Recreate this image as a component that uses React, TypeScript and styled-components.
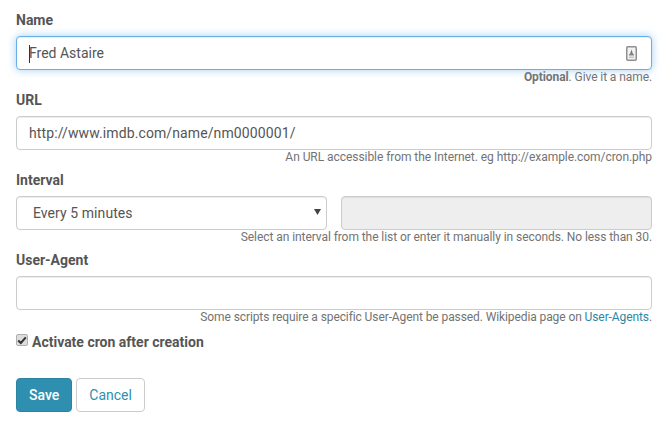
import React from "react";
import styled, { createGlobalStyle } from "styled-components";

const Global = createGlobalStyle`
  html, body { margin: 0; padding: 0; background: #fff; }
  body { font-family: Roboto, "Liberation Sans", sans-serif; font-size: 14px; color: #555; }
  * { box-sizing: border-box; }
`;

const Form = styled.form`
  width: 636px;
  margin-left: 16px;
  padding-top: 10px;
  display: flex;
  flex-direction: column;
`;

const Field = styled.div`
  height: 80px;
  display: flex;
  flex-direction: column;
`;

const Label = styled.label`
  display: block;
  height: 20px;
  line-height: 20px;
  margin-bottom: 6px;
  font-weight: 700;
  font-size: 14px;
  color: #555;
`;

const InputWrap = styled.div`
  position: relative;
  height: 34px;
`;

const Input = styled.input<{ $focus?: boolean; $wide?: boolean }>`
  display: block;
  width: 100%;
  height: 34px;
  padding: 6px 12px;
  font-family: inherit;
  font-size: 14px;
  letter-spacing: ${(p) => (p.$wide ? "0.11px" : "0")};
  color: #555;
  background: ${(p) => (p.disabled ? "#eee" : "#fff")};
  border: 1px solid ${(p) => (p.$focus ? "#66afe9" : "#ccc")};
  border-radius: 4px;
  outline: none;
  box-shadow: ${(p) =>
    p.$focus
      ? "inset 0 1px 1px rgba(0,0,0,.075), 0 0 8px rgba(102,175,233,.6)"
      : "inset 0 1px 1px rgba(0,0,0,.075)"};
`;

const Caret = styled.span`
  position: absolute;
  left: 13px;
  top: 9px;
  width: 1px;
  height: 18px;
  background: #333;
`;

const ContactIcon = styled.svg`
  position: absolute;
  right: 15px;
  top: 10px;
`;

const Help = styled.div<{ $spacing: number }>`
  font-size: 12px;
  line-height: 15px;
  letter-spacing: ${(p) => p.$spacing}px;
  text-align: right;
  color: #737373;
`;

const Strong = styled.strong`
  font-weight: 700;
`;

const Link = styled.a`
  color: #2b87a6;
  text-decoration: none;
`;

const IntervalRow = styled.div`
  display: grid;
  grid-template-columns: 311px 311px;
  justify-content: space-between;
  height: 34px;
`;

const SelectWrap = styled.div`
  position: relative;
  height: 34px;
`;

const Select = styled.select`
  display: block;
  width: 100%;
  height: 34px;
  padding: 6px 12px 6px 16px;
  appearance: none;
  font-family: inherit;
  font-size: 14px;
  letter-spacing: 0.07px;
  color: #555;
  background: #fff;
  border: 1px solid #ccc;
  border-radius: 4px;
  outline: none;
  box-shadow: inset 0 1px 1px rgba(0,0,0,.075);
`;

const SelectArrow = styled.svg`
  position: absolute;
  left: 298px;
  top: 13px;
  pointer-events: none;
`;

const CheckRow = styled.label`
  display: flex;
  align-items: center;
  height: 20px;
  margin-top: 2px;
  font-weight: 700;
  font-size: 14px;
  color: #555;
`;

const CheckBox = styled.span`
  display: flex;
  align-items: center;
  justify-content: center;
  width: 12px;
  height: 12px;
  margin-right: 4px;
  position: relative;
  top: -2px;
  background: #ddd;
  border: 1px solid #b0b0b0;
  border-radius: 2px;
`;

const Actions = styled.div`
  display: flex;
  gap: 4px;
  margin-top: 26px;
`;

const Button = styled.button<{ $primary?: boolean }>`
  height: 34px;
  padding: 6px 12px;
  font-family: inherit;
  font-size: 14px;
  font-weight: ${(p) => (p.$primary ? 500 : 400)};
  border-radius: 4px;
  border: 1px solid ${(p) => (p.$primary ? "#2a84a2" : "#ccc")};
  background: ${(p) => (p.$primary ? "#2f8fb0" : "#fff")};
  color: ${(p) => (p.$primary ? "#fff" : "#2f8fb0")};
`;

export default function App() {
  return (
    <>
      <Global />
      <Form onSubmit={(e) => e.preventDefault()}>
        <Field>
          <Label>Name</Label>
          <InputWrap>
            <Input $focus readOnly value="Fred Astaire" />
            <Caret />
            <ContactIcon width="11" height="15" viewBox="0 0 11 15">
              <rect x="0.75" y="0.75" width="9.5" height="13.5" rx="1" fill="#f2f2f2" stroke="#8f8f8f" strokeWidth="1.5" />
              <path d="M5.5 3.5 L7 8 H4 Z" fill="#777" />
              <rect x="3" y="8" width="5" height="1.5" fill="#888" />
              <rect x="3" y="10.5" width="5" height="1.5" fill="#c4c4c4" />
            </ContactIcon>
          </InputWrap>
          <Help $spacing={-0.085}><Strong>Optional</Strong>. Give it a name.</Help>
        </Field>
        <Field>
          <Label>URL</Label>
          <InputWrap>
            <Input $wide readOnly value="http://www.imdb.com/name/nm0000001/" />
          </InputWrap>
          <Help $spacing={-0.055}>An URL accessible from the Internet. eg http://example.com/cron.php</Help>
        </Field>
        <Field>
          <Label>Interval</Label>
          <IntervalRow>
            <SelectWrap>
              <Select defaultValue="300">
                <option value="300">Every 5 minutes</option>
              </Select>
              <SelectArrow width="7" height="6" viewBox="0 0 7 6">
                <path d="M0 0 H7 L3.5 6 Z" fill="#444" />
              </SelectArrow>
            </SelectWrap>
            <Input disabled />
          </IntervalRow>
          <Help $spacing={-0.072}>Select an interval from the list or enter it manually in seconds. No less than 30.</Help>
        </Field>
        <Field>
          <Label>User-Agent</Label>
          <InputWrap>
            <Input readOnly value="" />
          </InputWrap>
          <Help $spacing={-0.097}>Some scripts require a specific User-Agent be passed. Wikipedia page on <Link>User-Agents</Link>.</Help>
        </Field>
        <CheckRow>
          <CheckBox>
            <svg width="10" height="9" viewBox="0 0 10 9">
              <path d="M1.2 4.6 L3.8 7 L8.8 1.4" fill="none" stroke="#333" strokeWidth="2" />
            </svg>
          </CheckBox>
          Activate cron after creation
        </CheckRow>
        <Actions>
          <Button $primary>Save</Button>
          <Button>Cancel</Button>
        </Actions>
      </Form>
    </>
  );
}
